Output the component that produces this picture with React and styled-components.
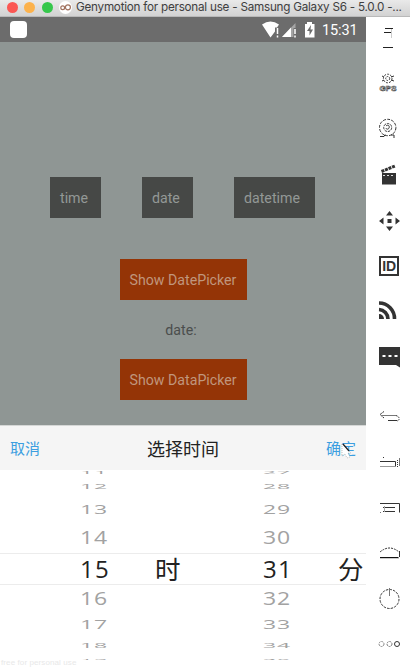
import React from "react";
import styled, { createGlobalStyle } from "styled-components";

const GlobalStyle = createGlobalStyle`
  * { box-sizing: border-box; }
  body { margin: 0; background: #fff; overflow: hidden; }
`;

const Window = styled.div`
  width: 410px;
  height: 667px;
  display: flex;
  flex-direction: column;
  overflow: hidden;
  background: #fff;
  font-family: Roboto, "Noto Sans CJK SC", sans-serif;
`;

const TitleBar = styled.header`
  height: 17px;
  flex: none;
  display: flex;
  align-items: center;
  padding: 0 0 2px 6.5px;
  background: linear-gradient(#e9e9e9, #d2d2d2);
  border-bottom: 1px solid #b9b9b9;
`;

const Light = styled.span`
  width: 11px;
  height: 11px;
  flex: none;
  margin-right: 6.5px;
  border-radius: 50%;
  background: ${(p) => p.$color};
`;

const Logo = styled.svg`
  width: 13px;
  height: 13px;
  flex: none;
`;

const Title = styled.span`
  margin-left: 4px;
  font: 11.7px/14px Inter, sans-serif;
  letter-spacing: -0.24px;
  color: #404040;
  white-space: nowrap;
`;

const Body = styled.div`
  flex: 1;
  display: flex;
  min-height: 0;
`;

const Device = styled.main`
  width: 366px;
  display: flex;
  flex-direction: column;
`;

const StatusBar = styled.div`
  height: 25px;
  flex: none;
  display: flex;
  align-items: center;
  padding: 0 9px 0 10px;
  background: #6c6c6c;
`;

const Notice = styled.span`
  width: 17px;
  height: 17px;
  border-radius: 4px;
  background: #fff;
  margin-right: auto;
`;

const StatusIcons = styled.svg`
  width: 54px;
  height: 18px;
  margin-right: 6px;
`;

const Clock = styled.span`
  font-size: 14.5px;
  line-height: 18px;
  padding-top: 2px;
  color: #fff;
  width: 35px;
  white-space: nowrap;
  letter-spacing: -0.1px;
`;

const Screen = styled.section`
  height: 383px;
  flex: none;
  display: flex;
  flex-direction: column;
  align-items: center;
  padding-top: 135px;
  background: #8f9694;
  overflow: hidden;
`;

const ModeRow = styled.div`
  display: flex;
  gap: 41px;
  margin: 0 1px 41px 0;
`;

const Button = styled.button`
  height: 41px;
  width: ${(p) => p.$width}px;
  flex: none;
  border: 0;
  padding: 0 0 0 10px;
  text-align: left;
  white-space: nowrap;
  font: 14.2px/20px Roboto, sans-serif;
  background: ${(p) => (p.$accent ? "#943406" : "#464846")};
  color: ${(p) => (p.$accent ? "#c0967d" : "#939896")};
`;

const Label = styled.p`
  margin: 0;
  height: 59px;
  flex: none;
  padding-right: 4px;
  font-size: 14.2px;
  line-height: 60px;
  color: #4b4e4d;
`;

const Sheet = styled.section`
  flex: 1;
  display: flex;
  flex-direction: column;
  min-height: 0;
`;

const SheetHeader = styled.div`
  height: 45px;
  flex: none;
  display: flex;
  justify-content: space-between;
  align-items: center;
  padding: 0 10px;
  background: #f5f5f5;
  border-top: 1px solid #d5d7d6;
`;

const Action = styled.button`
  position: relative;
  border: 0;
  padding: 0;
  background: none;
  color: #3c9ee0;
  font: 15px/22px "Noto Sans CJK SC", sans-serif;
`;

const SheetTitle = styled.h1`
  margin: 0;
  font: 18px/26px "Noto Sans CJK SC", sans-serif;
  color: #222;
`;

const Pointer = styled.svg`
  position: absolute;
  left: 15px;
  top: 6px;
  width: 11px;
  height: 16px;
`;

const Wheels = styled.div`
  position: relative;
  flex: 1;
  display: flex;
  overflow: hidden;
  background: #fff;
`;

const Wheel = styled.div`
  width: 183px;
  display: flex;
  flex-direction: column;
`;

const WheelRow = styled.div`
  height: ${(p) => p.$height}px;
  flex: none;
  display: flex;
  align-items: center;
  padding-left: 80px;
  ${(p) => p.$current && "border: solid #ececec; border-width: 1px 0;"}
`;

const Value = styled.span`
  width: 30px;
  font: ${(p) => (p.$current ? 24 : 23)}px/30px "Open Sans", sans-serif;
  letter-spacing: ${(p) => (p.$current ? 1.3 : 0.9)}px;
  color: ${(p) => (p.$current ? "#222" : "#a2a2a2")};
  transform: scaleY(${(p) => p.$scale});
`;

const Unit = styled.span`
  margin: -3px 0 0 45px;
  font: 25.5px/30px "Noto Sans CJK SC", sans-serif;
  color: #222;
`;

const Watermark = styled.span`
  position: absolute;
  left: 1px;
  bottom: -1px;
  font: 8px/10px "Liberation Sans", sans-serif;
  letter-spacing: 0.1px;
  color: #e8e8e8;
`;

const Tools = styled.aside`
  width: 44px;
  display: flex;
  flex-direction: column;
  background: #fff;
`;

const ToolIcon = styled.svg`
  width: 44px;
  flex: none;
  margin-bottom: ${(p) => p.$after || 0}px;
  fill: none;
  stroke: #333;
  stroke-width: 1;
`;

const GpsText = styled.text`
  font: bold 8px "Liberation Sans", sans-serif;
  fill: #fff;
  stroke: #444;
  stroke-width: 0.6px;
`;

const IdText = styled.text`
  font: bold 14px "Liberation Sans", sans-serif;
  fill: #333;
  stroke: none;
`;

function Tool({ top, height, after, children }) {
  return (
    <ToolIcon height={height} viewBox={`366 ${top} 44 ${height}`} $after={after}>
      {children}
    </ToolIcon>
  );
}

const ROWS = [
  { height: 5, scale: 0.12 },
  { height: 22, scale: 0.34 },
  { height: 23, scale: 0.57 },
  { height: 33, scale: 0.79 },
  { height: 32, scale: 1, current: true },
  { height: 25, scale: 0.79 },
  { height: 27, scale: 0.57 },
  { height: 15, scale: 0.34 },
  { height: 14, scale: 0.1 },
];

function NumberWheel({ start, unit }) {
  return (
    <Wheel>
      {ROWS.map(({ height, scale, current }, i) => (
        <WheelRow key={i} $height={height} $current={current}>
          <Value $scale={scale} $current={current}>{start + i}</Value>
          {current && <Unit>{unit}</Unit>}
        </WheelRow>
      ))}
    </Wheel>
  );
}

function Toolbox() {
  return (
    <Tools>
      <Tool top={17} height={43}>
        <path d="M385 28.5h8M384 32.5h7M383 47.5h10" stroke="#222" />
        <path d="M391.5 29v9" stroke="#ccc" />
      </Tool>
      <Tool top={60} height={46}>
        <circle cx="387.7" cy="78.5" r="4.3" strokeDasharray="2 1.2" />
        <circle cx="387.7" cy="78.5" r="2" strokeDasharray="1.5 1" />
        <path d="M382 76l2 1M391 77l3-1M382 81l2-1M391 80l3 1" />
        <GpsText x="379.5" y="91" textLength="17">GPS</GpsText>
      </Tool>
      <Tool top={106} height={46}>
        <circle cx="387.7" cy="127.5" r="8.2" strokeDasharray="3 1.2" />
        <circle cx="387.7" cy="127.5" r="4" strokeDasharray="2.5 1" />
        <path d="M386 126c2-2 4 0 3 2s-3 1-3 0M380 136.5h4l1-2M391 135h3v3" />
      </Tool>
      <Tool top={152} height={46}>
        <path d="M382 173h14v11.5h-14z" fill="#333" stroke="none" />
        <path d="M381.5 171.5L395 166" strokeWidth="3" strokeDasharray="3 0.8" />
        <path d="M383 175.5h12" stroke="#ddd" strokeDasharray="2 2" />
      </Tool>
      <Tool top={198} height={46}>
        <path
          d="M389.5 211l3.5 4.5h-7zM389.5 231l3.5-4.5h-7zM379 221l4.5-3.5v7zM400 221l-4.5-3.5v7zM387.5 219h4v4h-4z"
          fill="#333" stroke="none"
        />
      </Tool>
      <Tool top={244} height={46}>
        <path d="M380 257h18v18h-18z" strokeWidth="2" />
        <IdText x="382.2" y="271">ID</IdText>
      </Tool>
      <Tool top={290} height={44}>
        <path d="M379 303a15.5 15.5 0 0 1 15.5 16M379 309.5a9.5 9.5 0 0 1 9 9.5" strokeWidth="3.6" />
        <path d="M379 314a5 5 0 0 1 5 5h-5z" fill="#333" stroke="none" />
      </Tool>
      <Tool top={334} height={46} after={13}>
        <path d="M379 347h21v20.5l-4-2.5h-17z" fill="#333" stroke="none" />
        <path d="M382.5 356h3M388.5 356h3M394.5 356h3" stroke="#fff" strokeWidth="2" />
      </Tool>
      <Tool top={393} height={46}>
        <path d="M384 411.5l-4 3 4 3.5" strokeDasharray="2 0.8" />
        <path d="M382 415.5h14" stroke="#777" />
        <path d="M396 415.5c4 1 4 5 1 5.5" strokeDasharray="1.5 1" />
        <path d="M388 420.5h9" />
      </Tool>
      <Tool top={439} height={46}>
        <path d="M383 457.5h1M380 461.5h15.5v5" />
        <path d="M380 466.5h16" stroke="#999" />
        <path d="M397.5 460v7" strokeDasharray="1 1" />
        <path d="M399.5 458v8" stroke="#777" />
      </Tool>
      <Tool top={485} height={46}>
        <path d="M380 503.5h19.5v9M383 507.5h12M383 511.5h12" />
        <path d="M384.5 506v6" stroke="#aaa" />
        <path d="M380 512.5h1" stroke="#777" />
      </Tool>
      <Tool top={531} height={46}>
        <path d="M380 552q9.5-8 19 0" strokeDasharray="2 1" />
        <path d="M380 557.5h18.5" stroke="#111" />
        <path d="M399.5 551v6" />
        <path d="M380 558.5h19" stroke="#ccc" />
      </Tool>
      <Tool top={577} height={44}>
        <circle cx="389.5" cy="599" r="9.5" strokeDasharray="2.5 1.2" />
        <path d="M389.5 588v8" stroke="#777" />
      </Tool>
      <Tool top={621} height={46}>
        <circle cx="381.5" cy="644" r="2.5" stroke="#888" strokeDasharray="2 0.8" />
        <circle cx="389.5" cy="644" r="2.5" stroke="#777" strokeDasharray="2 0.8" />
        <circle cx="397" cy="644" r="2.5" />
      </Tool>
    </Tools>
  );
}

export default function App() {
  return (
    <Window>
      <GlobalStyle />
      <TitleBar>
        <Light $color="#fb5753" />
        <Light $color="#fcb24c" />
        <Light $color="#35c74b" />
        <Logo viewBox="0 0 13 13">
          <circle cx="6.5" cy="6.5" r="6.5" fill="#fff" />
          <g fill="none" stroke="#a0715e" strokeWidth="1.2">
            <circle cx="3.7" cy="6.8" r="1.9" />
            <circle cx="8.9" cy="6.3" r="2.5" />
          </g>
        </Logo>
        <Title>Genymotion for personal use - Samsung Galaxy S6 - 5.0.0 -...</Title>
      </TitleBar>
      <Body>
        <Device>
          <StatusBar>
            <Notice />
            <StatusIcons viewBox="262 21 54 18">
              <path d="M262 24.5q8.5-6 17 0l-2 3h-2v4l-4.5 6z" fill="#fff" />
              <path d="M277.5 28v6M277.5 35.5v2" stroke="#fff" strokeWidth="1.5" />
              <path d="M282 37l13.5-14v5h-2v9z" fill="#a5a5a5" />
              <path d="M282 37l9-9.5V37z" fill="#fff" />
              <path d="M295 29v5M295 35.5v2" stroke="#fff" strokeWidth="1.5" />
              <path d="M307 22h5v2h2.5v13.5h-9.5V24h2z" fill="#fff" />
              <path d="M311 25l-4 6h2.5v4.5l3.5-6h-2.5z" fill="#6c6c6c" />
            </StatusIcons>
            <Clock>15:31</Clock>
          </StatusBar>
          <Screen>
            <ModeRow>
              <Button $width={51}>time</Button>
              <Button $width={51}>date</Button>
              <Button $width={81}>datetime</Button>
            </ModeRow>
            <Button $accent $width={127}>Show DatePicker</Button>
            <Label>date:</Label>
            <Button $accent $width={127}>Show DataPicker</Button>
          </Screen>
          <Sheet>
            <SheetHeader>
              <Action>取消</Action>
              <SheetTitle>选择时间</SheetTitle>
              <Action>
                确定
                <Pointer viewBox="0 0 11 16">
                  <path d="M1 1v12l3-2 2 4 3-1-2-4h3z" fill="#fff" stroke="#999" strokeWidth=".6" strokeDasharray="1 1" />
                  <path d="M2 1l6 7" stroke="#222" strokeWidth="1.2" />
                </Pointer>
              </Action>
            </SheetHeader>
            <Wheels>
              <NumberWheel start={11} unit="时" />
              <NumberWheel start={27} unit="分" />
              <Watermark>free for personal use</Watermark>
            </Wheels>
          </Sheet>
        </Device>
        <Toolbox />
      </Body>
    </Window>
  );
}
